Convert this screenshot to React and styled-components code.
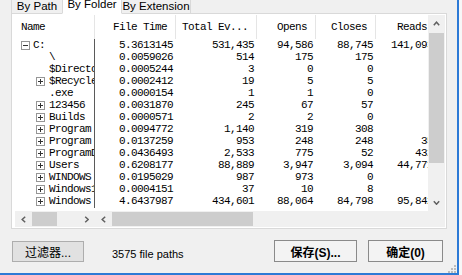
import React from 'react'
import styled, { createGlobalStyle } from 'styled-components'

const UI_FONT = '"Liberation Sans", Arial, "Noto Sans CJK SC", sans-serif'
const LIST_FONT = '"Liberation Mono", "DejaVu Sans Mono", monospace'

const GlobalStyle = createGlobalStyle`
  html, body {
    margin: 0;
    padding: 0;
    background: #f7f7f7;
    overflow: hidden;
  }
  * {
    box-sizing: border-box;
  }
`

// column widths of the right list (File Time .. Reads)
const COLS = [81, 81, 59, 60, 60]
const HEADS = ['File Time', 'Total Ev...', 'Opens', 'Closes', 'Reads']

const rows = [
  { name: 'C:', level: 0, box: 'minus', v: ['5.3613145', '531,435', '94,586', '88,745', '141,093'] },
  { name: '\\', level: 1, v: ['0.0059026', '514', '175', '175', ''] },
  { name: '$Directory', level: 1, v: ['0.0005244', '3', '0', '0', ''] },
  { name: '$Recycle.Bin', level: 1, box: 'plus', v: ['0.0002412', '19', '5', '5', ''] },
  { name: '.exe', level: 1, v: ['0.0000154', '1', '1', '0', ''] },
  { name: '123456', level: 1, box: 'plus', v: ['0.0031870', '245', '67', '57', ''] },
  { name: 'Builds', level: 1, box: 'plus', v: ['0.0000571', '2', '2', '0', ''] },
  { name: 'Program Files', level: 1, box: 'plus', v: ['0.0094772', '1,140', '319', '308', ''] },
  { name: 'Program Files (x86)', level: 1, box: 'plus', v: ['0.0137259', '953', '248', '248', '35'] },
  { name: 'ProgramData', level: 1, box: 'plus', v: ['0.0436493', '2,533', '775', '52', '432'] },
  { name: 'Users', level: 1, box: 'plus', v: ['0.6208177', '88,889', '3,947', '3,094', '44,771'] },
  { name: 'WINDOWS', level: 1, box: 'plus', v: ['0.0195029', '987', '973', '0', ''] },
  { name: 'Windows10Upgrade', level: 1, box: 'plus', v: ['0.0004151', '37', '10', '8', ''] },
  { name: 'Windows Kits', level: 1, box: 'plus', v: ['4.6437987', '434,601', '88,064', '84,798', '95,842'] }
]

const Window = styled.div`
  position: relative;
  width: 459px;
  height: 275px;
  display: flex;
  flex-direction: column;
  padding-left: 11px;
  background: #f0f0f0;
  border-right: 2px solid #2d7ad6;
  border-bottom: 2px solid #2d7ad6;
  font-family: ${UI_FONT};
  overflow: hidden;
`

const TabStrip = styled.div`
  display: flex;
  height: 18px;
  margin-top: -4px;
  margin-bottom: -1px;
  position: relative;
  z-index: 1;
`

const Tab = styled.div`
  position: relative;
  z-index: ${p => (p.$active ? 2 : 1)};
  width: ${p => p.$w}px;
  height: 18px;
  margin-left: ${p => (p.$first ? 0 : -1)}px;
  padding-top: ${p => (p.$active ? 1 : 3)}px;
  font-size: 11.5px;
  line-height: 13px;
  text-align: center;
  color: #000;
  white-space: nowrap;
  background: ${p => (p.$active ? '#fff' : '#f0f0f0')};
  border: 1px solid #d9d9d9;
  border-bottom-color: ${p => (p.$active ? '#fff' : '#d9d9d9')};
`

const Panel = styled.div`
  width: 436px;
  height: 216px;
  flex: none;
  display: flex;
  background: #fff;
  border: 1px solid #d9d9d9;
  padding: 1px 1px 1px 3px;
`

const LeftList = styled.div`
  width: 80px;
  flex: none;
  display: flex;
  flex-direction: column;
`

const RightList = styled.div`
  flex: 1;
  min-width: 0;
  display: flex;
  flex-direction: column;
`

const RightTop = styled.div`
  flex: 1;
  min-height: 0;
  display: flex;
`

const Grid = styled.div`
  flex: 1;
  min-width: 0;
  overflow: hidden;
`

const HeaderRow = styled.div`
  display: flex;
  height: 24px;
  flex: none;
`

const HeadCell = styled.div`
  width: ${p => p.$w}px;
  flex: none;
  border-right: 1px solid #e5e5e5;
  padding: 0 ${p => (p.$left ? 0 : 8)}px 0 ${p => (p.$left ? 6 : 0)}px;
  text-align: ${p => (p.$left ? 'left' : 'right')};
  font: 11px/24px ${LIST_FONT};
  letter-spacing: -0.6px;
  color: #000;
  white-space: nowrap;
  overflow: hidden;
`

const Body = styled.div`
  height: 169px;
  flex: none;
  border-right: 1px solid ${p => (p.$split ? '#5a5a5a' : 'transparent')};
`

const NameRow = styled.div`
  display: flex;
  align-items: center;
  height: 12px;
  padding-left: ${p => 6 + p.$level * 15}px;
  font: 11px/12px ${LIST_FONT};
  letter-spacing: -0.6px;
  color: #000;
  white-space: nowrap;
  overflow: hidden;
`

const BoxSlot = styled.span`
  width: 9px;
  height: 9px;
  flex: none;
  display: flex;
  margin-right: ${p => p.$gap}px;
`

const DataRow = styled.div`
  display: flex;
  height: 12px;
  font: 11px/12px ${LIST_FONT};
  letter-spacing: -0.6px;
  color: #000;
  white-space: nowrap;
`

const Cell = styled.div`
  width: ${p => p.$w}px;
  flex: none;
  text-align: right;
  padding-right: 3px;
`

const Filler = styled.div`
  flex: 1;
`

const VScroll = styled.div`
  width: 17px;
  flex: none;
  display: flex;
  flex-direction: column;
  background: #f0f0f0;
`

const HScroll = styled.div`
  height: 16px;
  flex: none;
  display: flex;
  background: #f0f0f0;
`

const ArrowBtn = styled.div`
  width: 17px;
  height: ${p => (p.$vertical ? '17px' : 'auto')};
  flex: none;
  display: flex;
  align-items: center;
  justify-content: center;
`

const VThumb = styled.div`
  height: ${p => p.$h}px;
  margin: 1px 1px 0;
  background: #cdcdcd;
  flex: none;
`

const HThumb = styled.div`
  width: ${p => p.$w}px;
  margin: 1px 0;
  background: #cdcdcd;
  flex: none;
`

const Footer = styled.div`
  flex: 1;
  display: flex;
  align-items: center;
  padding: 0 14px 0 1px;
`

const Button = styled.button`
  width: ${p => p.$w}px;
  height: ${p => p.$h}px;
  margin-left: ${p => p.$ml || 0};
  padding: 0;
  font-family: ${UI_FONT};
  font-size: 12px;
  font-weight: ${p => (p.$bold ? 700 : 400)};
  color: #000;
  background: ${p => (p.$bold ? '#f3f3f3' : '#e1e1e1')};
  border: 1px solid ${p => (p.$bold ? '#8a8a8a' : '#adadad')};
  border-radius: 0;
`

const Status = styled.span`
  margin-left: 28px;
  padding-top: 6px;
  font-size: 11px;
  color: #000;
`

const Grip = styled.svg`
  position: absolute;
  right: 1px;
  bottom: 0;
`

const Chevron = ({ dir }) => {
  const pts = {
    up: '0.8,4.2 3.5,1.2 6.2,4.2',
    down: '0.8,1.2 3.5,4.2 6.2,1.2',
    left: '4.2,0.8 1.2,3.5 4.2,6.2',
    right: '1.2,0.8 4.2,3.5 1.2,6.2'
  }[dir]
  const vert = dir === 'up' || dir === 'down'
  return (
    <svg width={vert ? 7 : 5} height={vert ? 5 : 7} viewBox={vert ? '0 0 7 5' : '0 0 5 7'}>
      <polyline points={pts} fill='none' stroke='#606060' strokeWidth='1.5' />
    </svg>
  )
}

const TreeBox = ({ kind }) => (
  <svg width='9' height='9' viewBox='0 0 9 9'>
    <rect x='0.5' y='0.5' width='8' height='8' fill='#fff' stroke='#969696' />
    <line x1='2' y1='4.5' x2='7' y2='4.5' stroke='#333' />
    {kind === 'plus' && <line x1='4.5' y1='2' x2='4.5' y2='7' stroke='#333' />}
  </svg>
)

const App = () => {
  return (
    <Window>
      <GlobalStyle />
      <TabStrip>
        <Tab $first $w={52}>By Path</Tab>
        <Tab $active $w={60}>By Folder</Tab>
        <Tab $w={70}>By Extension</Tab>
      </TabStrip>

      <Panel>
        <LeftList>
          <HeaderRow>
            <HeadCell $left $w={80}>Name</HeadCell>
          </HeaderRow>
          <Body $split>
            {rows.map((r, i) => (
              <NameRow key={i} $level={r.level}>
                <BoxSlot $gap={r.level ? 4 : 3}>{r.box && <TreeBox kind={r.box} />}</BoxSlot>
                {r.name}
              </NameRow>
            ))}
          </Body>
          <Filler />
          <HScroll>
            <ArrowBtn><Chevron dir='left' /></ArrowBtn>
            <HThumb $w={25} />
            <Filler />
            <ArrowBtn><Chevron dir='right' /></ArrowBtn>
          </HScroll>
        </LeftList>

        <RightList>
          <RightTop>
            <Grid>
              <HeaderRow>
                {HEADS.map((h, i) => (
                  <HeadCell key={h} $w={COLS[i]}>{h}</HeadCell>
                ))}
              </HeaderRow>
              <Body>
                {rows.map((r, i) => (
                  <DataRow key={i}>
                    {r.v.map((val, j) => (
                      <Cell key={j} $w={COLS[j]}>{val}</Cell>
                    ))}
                  </DataRow>
                ))}
              </Body>
            </Grid>
            <VScroll>
              <ArrowBtn $vertical><Chevron dir='up' /></ArrowBtn>
              <VThumb $h={130} />
              <Filler />
              <ArrowBtn $vertical><Chevron dir='down' /></ArrowBtn>
            </VScroll>
          </RightTop>
          <HScroll>
            <ArrowBtn><Chevron dir='left' /></ArrowBtn>
            <HThumb $w={141} />
          </HScroll>
        </RightList>
      </Panel>

      <Footer>
        <Button $w={72} $h={21}>过滤器...</Button>
        <Status>3575 file paths</Status>
        <Button $bold $w={83} $h={22} $ml='auto'>保存(S)...</Button>
        <Button $bold $w={75} $h={22} $ml='11px'>确定(0)</Button>
      </Footer>

      <Grip width='8' height='8' viewBox='0 0 8 8'>
        {[[6, 0], [6, 3], [3, 3], [6, 6], [3, 6], [0, 6]].map(([x, y], i) => (
          <rect key={i} x={x} y={y} width='2' height='2' fill='#bcbcbc' />
        ))}
      </Grip>
    </Window>
  )
}

export default App
